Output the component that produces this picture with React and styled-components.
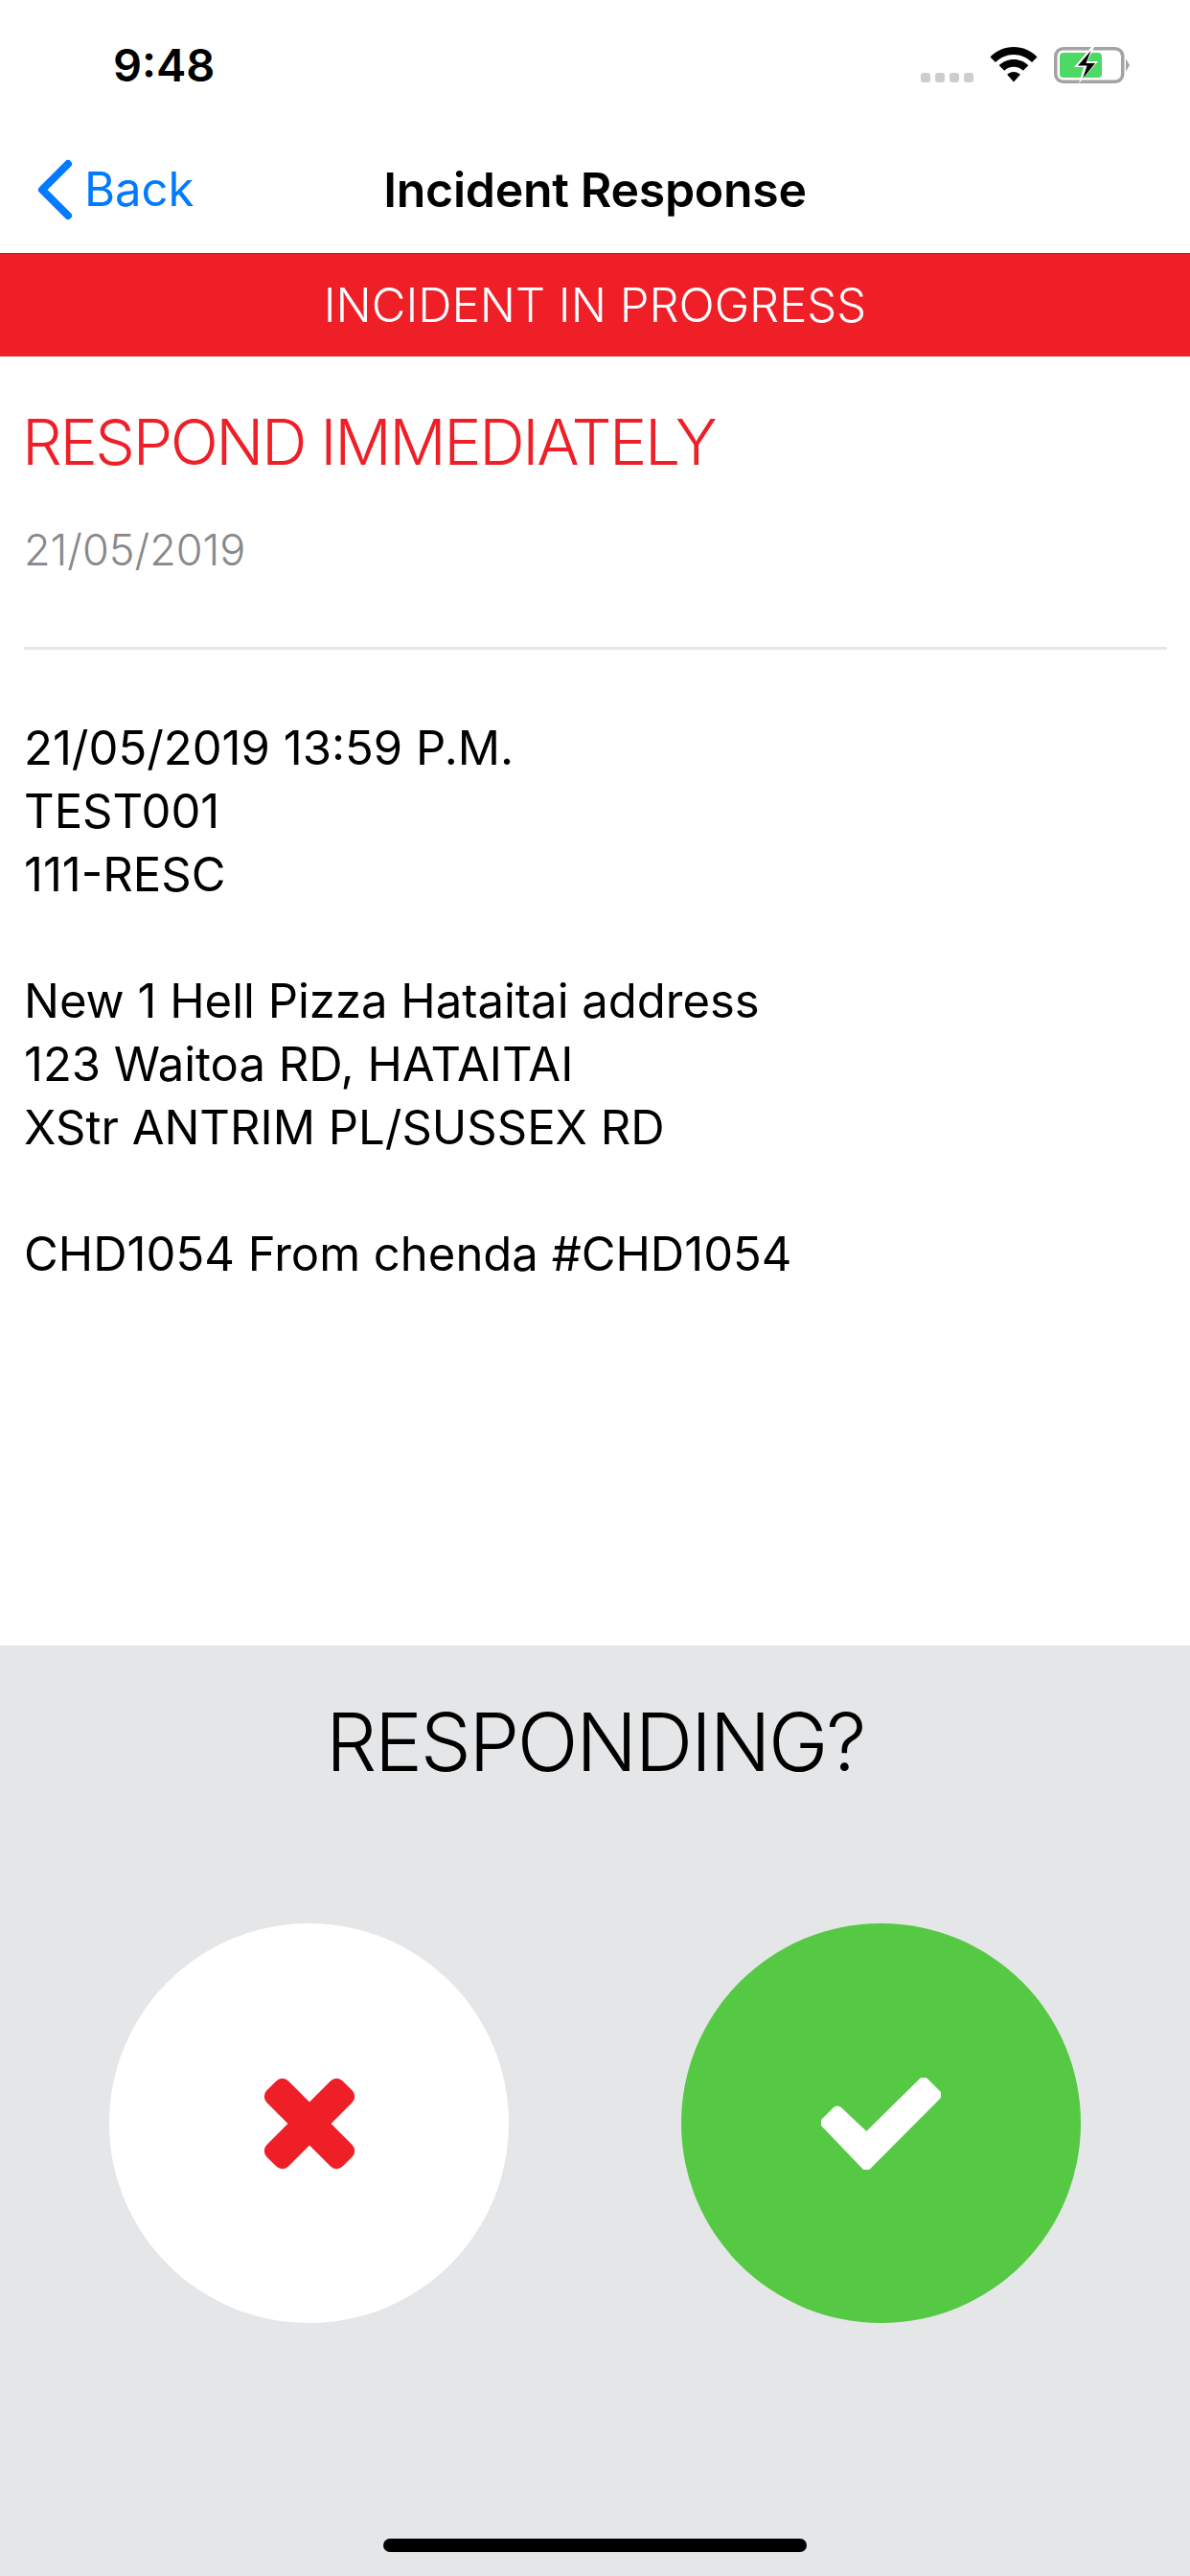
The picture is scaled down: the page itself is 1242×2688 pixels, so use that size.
import styled, { createGlobalStyle } from "styled-components";

const GlobalStyle = createGlobalStyle`
  html, body {
    margin: 0;
    padding: 0;
    background: #fff;
    font-family: Inter, "Liberation Sans", sans-serif;
  }
`;

const bodyLines = [
  "21/05/2019 13:59 P.M.",
  "TEST001",
  "111-RESC",
  "",
  "New 1 Hell Pizza Hataitai address",
  "123 Waitoa RD, HATAITAI",
  "XStr ANTRIM PL/SUSSEX RD",
  "",
  "CHD1054 From chenda #CHD1054",
];

function App() {
  return (
    <Screen>
      <GlobalStyle />
      <StatusBar>
        <Time>9:48</Time>
        <StatusIcons>
          <SignalDots>
            <Dot />
            <Dot />
            <Dot />
            <Dot />
          </SignalDots>
          <svg width="50" height="37" viewBox="0 0 50 37">
            <path d="M25 0C15.5 0 7 3.8 0.5 10.5L6 16C11 11 17.6 8 25 8s14 3 19 8l5.5-5.5C43 3.8 34.5 0 25 0z" fill="#000" />
            <path d="M25 13c-6 0-11.400 2.400-15.300 6.200l5.500 5.500C17.800 22.200 21.200 20.800 25 20.800s7.200 1.400 9.800 3.900l5.500-5.500C36.400 15.400 31 13 25 13z" fill="#000" />
            <path d="M25 26c-2.700 0-5.100 1.100-6.900 2.800L25 36.500l6.900-7.700C30.100 27.100 27.700 26 25 26z" fill="#000" />
          </svg>
          <svg width="80" height="38" viewBox="0 0 80 38">
            <rect x="1.750" y="1.750" width="70" height="34.500" rx="8" fill="none" stroke="#a3a3a3" strokeWidth="3.500" />
            <rect x="6" y="6" width="44" height="26" rx="4" fill="#4cd964" />
            <path d="M75 12.500l4 6.500-4 6.500z" fill="#a3a3a3" />
            <path d="M39 0L21 21h10l-5 17 20-23H35L42 0z" fill="#fff" />
            <path d="M38.500 4L25 19.500h9.500L30 33l13-16H33.500z" fill="#000" />
          </svg>
        </StatusIcons>
      </StatusBar>
      <NavBar>
        <BackLink>
          <svg width="40" height="64" viewBox="0 0 40 64">
            <path d="M34 5L7 32l27 27" fill="none" stroke="#007aff" strokeWidth="8" strokeLinecap="round" strokeLinejoin="round" />
          </svg>
          <BackLabel>Back</BackLabel>
        </BackLink>
        <NavTitle>Incident Response</NavTitle>
      </NavBar>
      <Banner>INCIDENT IN PROGRESS</Banner>
      <Content>
        <Heading>RESPOND IMMEDIATELY</Heading>
        <DateLine>21/05/2019</DateLine>
        <Divider />
        <Details>
          {bodyLines.map((line, index) => (
            <DetailLine key={index}>{line}</DetailLine>
          ))}
        </Details>
      </Content>
      <ResponsePanel>
        <PanelTitle>RESPONDING?</PanelTitle>
        <Choices>
          <ChoiceButton $bg="#ffffff" aria-label="No">
            <svg width="96" height="96" viewBox="0 0 96 96">
              <g fill="#ee1f27">
                <rect x="-8" y="32" width="112" height="32" rx="9" transform="rotate(45 48 48)" />
                <rect x="-8" y="32" width="112" height="32" rx="9" transform="rotate(-45 48 48)" />
              </g>
            </svg>
          </ChoiceButton>
          <ChoiceButton $bg="#56c944" aria-label="Yes">
            <svg width="125" height="96" viewBox="0 0 125 96">
              <path
                d="M47.300 64.200L17 35.500 5.500 47l41.800 43.500L119.500 18 107 5.500z"
                fill="#fff"
                stroke="#fff"
                strokeWidth="12"
                strokeLinejoin="round"
              />
            </svg>
          </ChoiceButton>
        </Choices>
        <HomeIndicator />
      </ResponsePanel>
    </Screen>
  );
}

export default App;

const Screen = styled.div`
  display: flex;
  flex-direction: column;
  width: 1242px;
  height: 2688px;
  background: #fff;
  color: #000;
  overflow: hidden;
`;

const StatusBar = styled.div`
  display: flex;
  align-items: flex-start;
  justify-content: space-between;
  height: 132px;
  padding: 49px 62px 0 118px;
  box-sizing: border-box;
`;

const Time = styled.div`
  font-size: 47px;
  font-weight: 600;
  line-height: 38px;
`;

const StatusIcons = styled.div`
  display: flex;
  align-items: flex-start;
  gap: 17px;
`;

const SignalDots = styled.div`
  display: flex;
  gap: 5px;
  margin-top: 27px;
`;

const Dot = styled.span`
  width: 10px;
  height: 10px;
  border-radius: 3px;
  background: #cdcdcd;
`;

const NavBar = styled.div`
  position: relative;
  display: flex;
  align-items: center;
  justify-content: center;
  height: 132px;
`;

const BackLink = styled.div`
  position: absolute;
  left: 37px;
  top: 34px;
  display: flex;
  align-items: center;
  gap: 11px;
`;

const BackLabel = styled.span`
  font-size: 49px;
  color: #007aff;
  line-height: 64px;
`;

const NavTitle = styled.div`
  font-size: 50px;
  font-weight: 600;
  letter-spacing: -0.3px;
  line-height: 64px;
`;

const Banner = styled.div`
  display: flex;
  align-items: center;
  justify-content: center;
  height: 108px;
  box-sizing: border-box;
  background: #ee1f27;
  border-top: 1px solid #c0181f;
  color: #fff;
  font-size: 49px;
  font-weight: 300;
`;

const Content = styled.div`
  flex: 1;
  display: flex;
  flex-direction: column;
  padding: 0 24px 0 25px;
`;

const Heading = styled.div`
  margin: 49px 0 0 -2px;
  font-size: 66px;
  font-weight: 350;
  letter-spacing: -2.4px;
  line-height: 80px;
  color: #ee1f27;
`;

const DateLine = styled.div`
  margin-top: 43px;
  font-size: 45px;
  font-weight: 300;
  line-height: 60px;
  color: #88888c;
`;

const Divider = styled.div`
  height: 3px;
  margin-top: 71px;
  background: #e5e6e8;
`;

const Details = styled.div`
  margin-top: 70px;
`;

const DetailLine = styled.div`
  min-height: 66px;
  font-size: 49px;
  line-height: 66px;
`;

const ResponsePanel = styled.div`
  display: flex;
  flex-direction: column;
  align-items: center;
  height: 971px;
  background: #e5e6e8;
`;

const PanelTitle = styled.div`
  margin-top: 51px;
  font-size: 84px;
  font-weight: 300;
  letter-spacing: -2.3px;
  line-height: 100px;
`;

const Choices = styled.div`
  display: flex;
  justify-content: space-between;
  align-self: stretch;
  margin-top: 139px;
  padding: 0 114px;
`;

const ChoiceButton = styled.div`
  display: flex;
  align-items: center;
  justify-content: center;
  width: 417px;
  height: 417px;
  border-radius: 50%;
  background: ${(props) => props.$bg};
`;

const HomeIndicator = styled.div`
  width: 442px;
  height: 14px;
  margin-top: auto;
  margin-bottom: 25px;
  border-radius: 7px;
  background: #000;
`;
